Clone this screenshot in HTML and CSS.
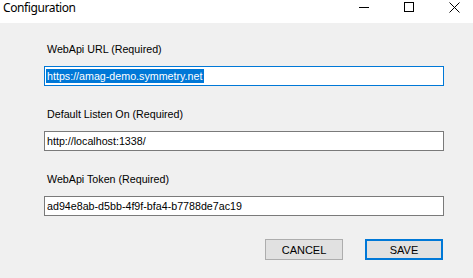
FILE: index.html
```html
<!DOCTYPE html>
<html>
<head>
<meta charset="utf-8">
<link rel="stylesheet" href="styles.css">
</head>
<body>
<div class="window">
  <div class="titlebar">
    <span class="title">Configuration</span>
    <div class="controls">
      <svg class="ctl" width="10" height="10" viewBox="0 0 10 10" shape-rendering="crispEdges"><line x1="0" y1="5.5" x2="10" y2="5.5" stroke="#000" stroke-width="1"/></svg>
      <svg class="ctl" width="10" height="10" viewBox="0 0 10 10" shape-rendering="crispEdges"><rect x="0.5" y="0.5" width="9" height="9" fill="none" stroke="#000" stroke-width="1"/></svg>
      <svg class="ctl" width="11" height="11" viewBox="0 0 11 11"><path d="M0.5 0.5 L10.5 10.5 M10.5 0.5 L0.5 10.5" stroke="#000" stroke-width="1" fill="none"/></svg>
    </div>
  </div>
  <div class="form">
    <div class="field">
      <div class="label">WebApi URL (Required)</div>
      <div class="input focused"><span class="value selected">https://amag-demo.symmetry.net</span></div>
    </div>
    <div class="field">
      <div class="label">Default Listen On (Required)</div>
      <div class="input"><span class="value">http://localhost:1338/</span></div>
    </div>
    <div class="field">
      <div class="label">WebApi Token (Required)</div>
      <div class="input"><span class="value">ad94e8ab-d5bb-4f9f-bfa4-b7788de7ac19</span></div>
    </div>
    <div class="buttons">
      <button class="btn">CANCEL</button>
      <button class="btn primary">SAVE</button>
    </div>
  </div>
</div>
</body>
</html>
```
FILE: styles.css
```css
html, body {
  margin: 0;
  padding: 0;
}
body {
  width: 473px;
  height: 278px;
  overflow: hidden;
  background: #f0f0f0;
  font-family: "Liberation Sans", Arial, sans-serif;
  font-size: 10.7px;
  color: #000;
}
.window {
  display: flex;
  flex-direction: column;
}
.titlebar {
  height: 23px;
  background: #fff;
  display: flex;
  align-items: flex-start;
}
.title {
  font-family: "Noto Sans", "Open Sans", sans-serif;
  font-size: 12px;
  letter-spacing: -0.4px;
  line-height: 16px;
  padding-left: 3px;
}
.controls {
  margin-left: auto;
  display: flex;
  align-items: flex-start;
  padding-top: 2px;
  padding-right: 13px;
}
.ctl {
  display: block;
  margin-left: 35px;
}
.ctl:first-child {
  margin-left: 0;
}
.form {
  padding: 20px 0 0 44px;
  width: 400px;
  display: flex;
  flex-direction: column;
  gap: 22px;
}
.field {
  display: flex;
  flex-direction: column;
}
.label {
  line-height: 13px;
  padding-left: 3px;
  margin-bottom: 10px;
}
.input {
  height: 20px;
  box-sizing: border-box;
  border: 1px solid #7a7a7a;
  background: #fff;
  padding-left: 1px;
  display: flex;
  align-items: center;
}
.input.focused {
  border-color: #0078d7;
}
.value {
  line-height: 14px;
  padding: 0 2px 0 1px;
}
.value.selected {
  background: #0078d7;
  color: #fff;
}
.buttons {
  display: flex;
  justify-content: flex-end;
  gap: 22px;
  padding-right: 1px;
  margin-top: 1px;
}
.btn {
  width: 78px;
  height: 21px;
  box-sizing: border-box;
  border: 1px solid #adadad;
  background: #e1e1e1;
  font-family: "Liberation Sans", Arial, sans-serif;
  font-size: 11px;
  color: #000;
  padding: 0;
  margin: 0;
}
.btn.primary {
  border: 2px solid #0078d7;
}
```
